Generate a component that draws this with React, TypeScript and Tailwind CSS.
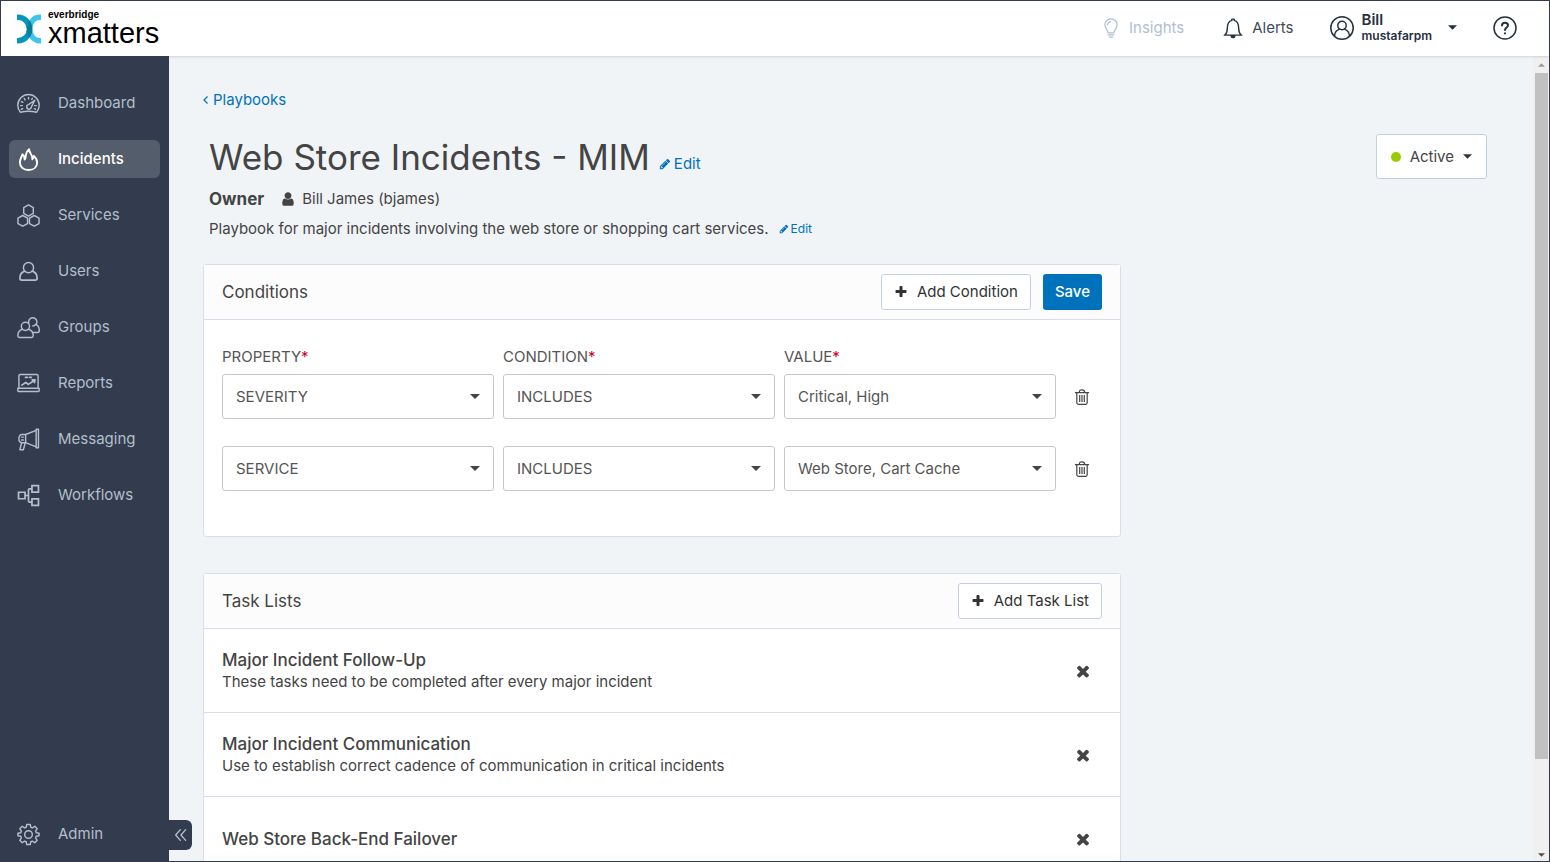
import { useState } from "react";
import type { ReactNode } from "react";

interface IconProps {
  className?: string;
}

interface Condition {
  id: number;
  property: string;
  condition: string;
  value: string;
}

const faPaths = {
  plus: "M1600 736v192q0 40-28 68t-68 28h-416v416q0 40-28 68t-68 28h-192q-40 0-68-28t-28-68v-416h-416q-40 0-68-28t-28-68v-192q0-40 28-68t68-28h416v-416q0-40 28-68t68-28h192q40 0 68 28t28 68v416h416q40 0 68 28t28 68z",
  times:
    "M1490 1322q0 40-28 68l-136 136q-28 28-68 28t-68-28l-294-294-294 294q-28 28-68 28t-68-28l-136-136q-28-28-28-68t28-68l294-294-294-294q-28-28-28-68t28-68l136-136q28-28 68-28t68 28l294 294 294-294q28-28 68-28t68 28l136 136q28 28 28 68t-28 68l-294 294 294 294q28 28 28 68z",
  pencil:
    "M491 1536l91-91-235-235-91 91v107h128v128h107zm523-928q0-22-22-22-10 0-17 7l-542 542q-7 7-7 17 0 22 22 22 10 0 17-7l542-542q7-7 7-17zm-54-192l416 416-832 832h-416v-416zm683 96q0 53-37 90l-166 166-416-416 166-165q36-38 90-38 53 0 91 38l235 234q37 39 37 91z",
  user: "M1536 1399q0 109-62.5 187t-150.5 78h-854q-88 0-150.5-78t-62.5-187q0-85 8.5-160.5t31.5-152 58.5-131 94-89 134.5-34.5q131 128 313 128t313-128q76 0 134.5 34.5t94 89 58.5 131 31.5 152 8.5 160.5zm-256-887q0 159-112.5 271.5t-271.5 112.5-271.5-112.5-112.5-271.5 112.5-271.5 271.5-112.5 271.5 112.5 112.5 271.5z",
};

function Fa({ name, className }: { name: keyof typeof faPaths; className?: string }) {
  return (
    <svg viewBox="0 0 1792 1792" fill="currentColor" className={className} aria-hidden="true">
      <path d={faPaths[name]} />
    </svg>
  );
}

function Caret({ className }: IconProps) {
  return (
    <svg viewBox="0 0 10 5" fill="currentColor" className={className} aria-hidden="true">
      <path d="M0 0h10L5 5z" />
    </svg>
  );
}

function Line({ children, className = "w-[23px] h-[23px]" }: { children: ReactNode; className?: string }) {
  return (
    <svg
      viewBox="0 0 24 24"
      fill="none"
      stroke="currentColor"
      strokeWidth="1.5"
      strokeLinecap="round"
      strokeLinejoin="round"
      className={className}
      aria-hidden="true"
    >
      {children}
    </svg>
  );
}

const navItems: { label: string; icon: ReactNode }[] = [
  {
    label: "Dashboard",
    icon: (
      <Line>
        <path d="M3.600 21.200C1.800 19 .8 16.500 .8 13.800a11.200 11.200 0 0 1 22.400 0c0 2.700-1 5.200-2.800 7.400-5.400-1.500-11.400-1.500-16.800 0z" />
        <path d="M12 5.600v1.800M7.600 6.800l.8 1.500M4.600 10l1.500.8M3.800 14.200h1.800M4.600 18l1.400-.6M19.400 18l-1.400-.6M20.200 14.200h-1.800M16 6.600l-.6 1.200" />
        <path d="M18.600 8.600l-6.600 4.600a2.400 2.400 0 1 0 2.900 2.500z" />
      </Line>
    ),
  },
  {
    label: "Incidents",
    icon: (
      <Line>
        <path
          strokeWidth="2"
          d="M12 23C6.500 23 3 19.600 3 14.900c0-3.500 2-5.300 2.600-8.300 1.700 1.200 2.400 3 2.400 5.400C9.300 10.400 9 8.600 9.500 6.400 10 4.200 11 2.600 12.600 1.200c.2 2.500.8 3.800 2 5.300 1.200 1.600 1.600 3 1.400 5.300 1-.8 1.600-2 1.600-3.600C19.600 10 21 12.300 21 15c0 4.700-3.500 8-9 8z"
        />
      </Line>
    ),
  },
  {
    label: "Services",
    icon: (
      <Line>
        <path d="M12 1l5 2.900v5.800l-5 2.900-5-2.900V3.900zM6 12l5 2.800v5.600l-5 2.800-5-2.800v-5.600zM18 12l5 2.800v5.600l-5 2.800-5-2.800v-5.600z" />
      </Line>
    ),
  },
  {
    label: "Users",
    icon: (
      <Line>
        <circle cx="12" cy="8" r="5.300" />
        <path strokeWidth="1.800" d="M8 11.600c-3.200 1-5 3.500-5 7.400 0 1.200.7 1.900 2 1.900h14c1.300 0 2-.7 2-1.900 0-3.900-1.800-6.400-5-7.400" />
      </Line>
    ),
  },
  {
    label: "Groups",
    icon: (
      <Line>
        <circle cx="8.800" cy="10.800" r="4.300" />
        <path d="M5.700 13.900C2.500 14.700.9 17 .9 20.600c0 1.200.5 1.800 1.700 1.800h12.600c1.200 0 1.700-.6 1.700-1.800 0-3.600-1.700-5.900-5-6.700" />
        <path d="M12.300 7.200a4.300 4.300 0 1 1 4.200 3.200M19.300 8.700c2.700.8 4 3 4 6.700 0 1.200-.5 1.800-1.700 1.800h-5.400" />
      </Line>
    ),
  },
  {
    label: "Reports",
    icon: (
      <Line>
        <path d="M2 17V3.800c0-.8.400-1.200 1.200-1.200h17.600c.8 0 1.200.4 1.200 1.200V17" />
        <path d="M.9 17h22.200v2.200c0 .8-.4 1.200-1.200 1.200H2.100c-.8 0-1.200-.4-1.200-1.200z" />
        <path strokeWidth="1.800" d="M5 13.700l4.200-2.800 2.600 2 6.600-4.200M15.800 8.300l3-.2-.6 2.900M8.800 5.500h2M13 5.500h2" />
      </Line>
    ),
  },
  {
    label: "Messaging",
    icon: (
      <Line>
        <path d="M9 6.800H5.200C3.200 6.800 2 8.400 2 11s1.200 4.300 3.200 4.300H9zM9 6.800l11-4.300v17.200L9 15.300M20 1.300h2.400v19.400H20z" />
        <path d="M4.800 15.400L3 22.700h3.600l2-7M4.700 9.500h2M4.700 12.600h2" />
      </Line>
    ),
  },
  {
    label: "Workflows",
    icon: (
      <Line>
        <path
          strokeWidth="1.800"
          strokeLinejoin="miter"
          d="M1.600 8.600h6.800v6.800H1.600zM15.600 1.600h6.800v6.800h-6.800zM15.600 15.600h6.800v6.800h-6.800zM8.400 12h3.600M15.600 5H13c-.7 0-1 .4-1 1v12c0 .6.3 1 1 1h2.600"
        />
      </Line>
    ),
  },
];

const taskLists = [
  {
    title: "Major Incident Follow-Up",
    description: "These tasks need to be completed after every major incident",
  },
  {
    title: "Major Incident Communication",
    description: "Use to establish correct cadence of communication in critical incidents",
  },
  { title: "Web Store Back-End Failover", description: "" },
];

const options = {
  property: ["SEVERITY", "SERVICE"],
  condition: ["INCLUDES", "EXCLUDES"],
  value: ["Critical, High", "Web Store, Cart Cache"],
};

const columns = ["property", "condition", "value"] as const;

function Logo() {
  return (
    <a href="#" className="flex items-center gap-[7px] text-black">
      <svg viewBox="0 0 24 30" className="w-6 h-[30px]" aria-hidden="true">
        <path d="M24 3.300h-1C17 3.300 12.800 8 12.800 15S17 26.700 23 26.700h1" fill="none" stroke="#3fc4ea" strokeWidth="5.500" />
        <path d="M0 3.300h1C7 3.300 12.400 8 12.400 15S7 26.700 1 26.700H0" fill="none" stroke="#0396bb" strokeWidth="5.500" />
        <path d="M12.600 6.500c3.400 5 3.400 12 0 17-3.400-5-3.400-12 0-17z" fill="#057a99" />
      </svg>
      <span className="flex flex-col font-['Liberation_Sans',sans-serif]">
        <span className="text-[10px] leading-[8px] font-bold">everbridge</span>
        <span className="text-[29px] leading-[28px]">xmatters</span>
      </span>
    </a>
  );
}

function Header() {
  return (
    <header className="relative z-10 flex justify-between items-center h-[55px] shrink-0 pl-4 pr-8 bg-white shadow-sm text-[15px] text-[#414b59]">
      <Logo />
      <div className="flex items-center pb-[2px]">
        <button type="button" className="flex items-center gap-2 mr-[38px] text-[#b1bfd0]" disabled>
          <Line className="w-5 h-6">
            <path d="M8.500 17.800c0-3.300-3.800-5-3.800-9.600a7.300 7.300 0 0 1 14.600 0c0 4.600-3.800 6.300-3.800 9.600zM8.700 20.300h6.600M10 22.800h4M8 8c.2-2 1.500-3.300 3.500-3.600" />
          </Line>
          Insights
        </button>
        <button type="button" className="flex items-center gap-2 mr-9">
          <Line className="w-[22px] h-[22px] text-[#26303f]">
            <path d="M3 19.800c2-1.800 2.800-4 2.800-7.600 0-4.500 1.700-7.600 4.900-8.500V2.300h2.600v1.400c3.200.9 4.900 4 4.900 8.500 0 3.600.8 5.800 2.800 7.600zM2.500 19.800h19" />
            <path d="M10 20.500h4c0 1.200-.8 2-2 2s-2-.8-2-2z" fill="currentColor" />
          </Line>
          Alerts
        </button>
        <button type="button" className="flex items-center gap-2 mr-9 text-left text-[#26303f]">
          <Line className="w-6 h-6">
            <circle cx="12" cy="12" r="11.200" />
            <circle cx="12" cy="9.500" r="4.200" />
            <path d="M4.500 20c.2-3.500 2-5.800 5-6.900M19.500 20c-.2-3.500-2-5.800-5-6.900" />
          </Line>
          <span className="flex flex-col font-semibold mr-2">
            <span className="text-[15px] leading-[16px]">Bill</span>
            <span className="text-[12px] leading-[16px]">mustafarpm</span>
          </span>
          <Caret className="w-[9px] h-[5px]" />
        </button>
        <button type="button" aria-label="Help" className="text-[#26303f]">
          <Line className="w-6 h-6">
            <circle cx="12" cy="12" r="11" />
            <path strokeWidth="2" d="M9 9.400C9 7.700 10.200 6.700 12 6.700s3 1 3 2.600c0 2.200-3 2.200-3 4.700M12 17.200v.2" />
          </Line>
        </button>
      </div>
    </header>
  );
}

function Sidebar() {
  const [active, setActive] = useState("Incidents");

  return (
    <aside className="relative z-10 flex flex-col justify-between w-[168px] shrink-0 pl-2 pr-[9px] pt-7 pb-2 bg-[#323c4e] text-[15px] text-[#b3bfcb]">
      <nav className="flex flex-col gap-[18px]">
        {navItems.map((item) => (
          <a
            key={item.label}
            href="#"
            onClick={() => setActive(item.label)}
            className={`flex items-center gap-[18px] h-[38px] pl-2 rounded-md ${
              active === item.label ? "bg-[#545d6b] text-white font-medium" : ""
            }`}
          >
            {item.icon}
            {item.label}
          </a>
        ))}
      </nav>
      <a href="#" className="flex items-center gap-[18px] h-[38px] pl-2">
        <Line>
          <circle cx="12" cy="12" r="4" />
          <path d="M10.200 1.500h3.600l.6 2.900 1.700.7 2.500-1.700 2.500 2.500-1.700 2.500.7 1.700 2.900.6v2.600l-2.900.6-.7 1.700 1.700 2.500-2.500 2.500-2.500-1.700-1.700.7-.6 2.900h-3.600l-.6-2.900-1.700-.7-2.500 1.700-2.500-2.500 1.700-2.500-.7-1.700-2.900-.6v-2.600l2.900-.6.7-1.700-1.700-2.500 2.500-2.500 2.500 1.700 1.700-.7z" />
        </Line>
        Admin
      </a>
      <button
        type="button"
        aria-label="Collapse menu"
        className="absolute left-full bottom-[11px] flex items-center justify-center w-[23px] h-[30px] rounded-r-md bg-[#323c4e]"
      >
        <Line className="w-4 h-4">
          <path strokeWidth="2" d="M11 4l-7 8 7 8M19 4l-7 8 7 8" />
        </Line>
      </button>
    </aside>
  );
}

function Scrollbar() {
  return (
    <div className="flex flex-col items-center justify-between w-4 shrink-0 pt-[7px] pb-1 bg-[#f0f0f0]" aria-hidden="true">
      <Caret className="w-[7px] h-1 rotate-180 text-[#9b9b9b]" />
      <div className="w-[13px] flex-1 mt-1.5">
        <div className="h-[88%] bg-[#c1c1c1]" />
      </div>
      <Caret className="w-[7px] h-1 text-[#505050]" />
    </div>
  );
}

function App() {
  const [conditions, setConditions] = useState<Condition[]>([
    { id: 1, property: "SEVERITY", condition: "INCLUDES", value: "Critical, High" },
    { id: 2, property: "SERVICE", condition: "INCLUDES", value: "Web Store, Cart Cache" },
  ]);
  const [lists, setLists] = useState(taskLists);

  const handleChange = (id: number, name: string, value: string) => {
    setConditions(conditions.map((c) => (c.id === id ? { ...c, [name]: value } : c)));
  };

  const addCondition = () => {
    setConditions([
      ...conditions,
      { id: Date.now(), property: "SEVERITY", condition: "INCLUDES", value: "Critical, High" },
    ]);
  };

  return (
    <div className="flex flex-col h-screen overflow-hidden border border-[#323c4e] bg-[#f0f4f7] font-['Inter',sans-serif] text-[15px] leading-[22px] text-[#444444]">
      <Header />
      <div className="flex flex-1 min-h-0">
        <Sidebar />
        <main className="flex-1 min-w-0 overflow-hidden pl-[34px] pr-[46px] pt-8">
          <a href="#" className="inline-flex items-center gap-1 text-[#0072bc]">
            <svg viewBox="0 0 6 8" fill="none" stroke="currentColor" strokeWidth="1.2" className="w-[6px] h-2" aria-hidden="true">
              <path d="M4.500.5L1 4l3.500 3.500" />
            </svg>
            Playbooks
          </a>
          <div className="flex items-start justify-between mt-[23px] pl-[6px]">
            <div>
              <div className="flex items-baseline gap-[9px]">
                <h1 className="text-[35px] leading-[46px]">Web Store Incidents - MIM</h1>
                <button type="button" className="flex items-center gap-[3px] text-[#0072bc]">
                  <Fa name="pencil" className="w-3 h-3" />
                  Edit
                </button>
              </div>
              <p className="flex items-center mt-2">
                <span className="text-[17px] font-bold">Owner</span>
                <Fa name="user" className="w-4 h-4 ml-4 mr-[6px]" />
                Bill James (bjames)
              </p>
              <p className="flex items-center gap-[10px] mt-2">
                Playbook for major incidents involving the web store or shopping cart services.
                <button type="button" className="flex items-center gap-[2px] text-[12px] text-[#0072bc]">
                  <Fa name="pencil" className="w-[10px] h-[10px]" />
                  Edit
                </button>
              </p>
            </div>
            <button
              type="button"
              className="flex items-center gap-[9px] h-[45px] px-[14px] rounded-[3px] border border-[#c3cfe0] bg-white"
            >
              <span className="w-[10px] h-[10px] rounded-full bg-[#99cc00]" />
              Active
              <Caret className="w-[9px] h-[5px] text-[#333333]" />
            </button>
          </div>

          <section className="max-w-[918px] mt-6 rounded-[3px] border border-[#d8dfea] bg-white">
            <div className="flex items-center justify-between h-[55px] px-[18px] border-b border-[#d8dfea] bg-[#fcfcfc]">
              <h2 className="text-[17px]">Conditions</h2>
              <div className="flex gap-3">
                <button
                  type="button"
                  onClick={addCondition}
                  className="flex items-center gap-[9px] h-9 px-3 rounded-[3px] border border-[#c3cfe0] bg-white text-[#333333]"
                >
                  <Fa name="plus" className="w-[14px] h-[14px]" />
                  Add Condition
                </button>
                <button type="button" className="h-9 px-3 rounded-[3px] bg-[#0072bc] text-white font-medium">
                  Save
                </button>
              </div>
            </div>
            <div className="px-[18px] pt-[26px] pb-[45px]">
              <div className="grid grid-cols-[1fr_1fr_1fr_37px] gap-x-[9px] mb-[6px] text-[#555555]">
                {columns.map((name) => (
                  <label key={name} htmlFor={`${name}-1`} className="uppercase">
                    {name}
                    <span className="text-[#cc0022]">*</span>
                  </label>
                ))}
              </div>
              <div className="flex flex-col gap-[27px]">
                {conditions.map((row) => (
                  <div key={row.id} className="grid grid-cols-[1fr_1fr_1fr_37px] gap-x-[9px]">
                    {columns.map((name) => (
                      <div key={name} className="relative">
                        <select
                          id={`${name}-${row.id}`}
                          aria-label={name}
                          value={row[name]}
                          onChange={(e) => handleChange(row.id, name, e.target.value)}
                          className="appearance-none w-full h-[45px] pl-[13px] pr-8 rounded-[3px] border border-[#c8c8c8] bg-white text-[#555555]"
                        >
                          {options[name].map((o) => (
                            <option key={o}>{o}</option>
                          ))}
                        </select>
                        <Caret className="absolute right-[14px] top-5 w-[10px] h-[5px] pointer-events-none" />
                      </div>
                    ))}
                    <button
                      type="button"
                      aria-label="Delete condition"
                      onClick={() => setConditions(conditions.filter((c) => c.id !== row.id))}
                      className="flex items-center justify-center w-[34px]"
                    >
                      <svg viewBox="0 0 14 16" fill="none" stroke="currentColor" strokeWidth="1.2" className="w-[14px] h-4" aria-hidden="true">
                        <path d="M0 3.600h14M4.300 3.400c0-1.800.8-2.600 2.700-2.600s2.700.8 2.700 2.600M1.800 3.600v10.200c0 1 .5 1.500 1.500 1.500h7.400c1 0 1.500-.5 1.500-1.500V3.600M4.700 6v7M7 6v7M9.300 6v7" />
                      </svg>
                    </button>
                  </div>
                ))}
              </div>
            </div>
          </section>

          <section className="max-w-[918px] mt-9 rounded-[3px] border border-[#d8dfea] bg-white">
            <div className="flex items-center justify-between h-[54px] px-[18px] bg-[#fcfcfc]">
              <h2 className="text-[17px]">Task Lists</h2>
              <button
                type="button"
                className="flex items-center gap-[9px] h-9 px-3 rounded-[3px] border border-[#c3cfe0] bg-white text-[#333333]"
              >
                <Fa name="plus" className="w-[14px] h-[14px]" />
                Add Task List
              </button>
            </div>
            <ul>
              {lists.map((list) => (
                <li
                  key={list.title}
                  className="flex items-center justify-between h-[84px] pl-[18px] pr-7 border-t border-[#d8dfea]"
                >
                  <div>
                    <h3 className="text-[17px] font-medium">{list.title}</h3>
                    {list.description && <p>{list.description}</p>}
                  </div>
                  <button
                    type="button"
                    aria-label="Remove task list"
                    onClick={() => setLists(lists.filter((l) => l.title !== list.title))}
                  >
                    <Fa name="times" className="w-[18px] h-[18px]" />
                  </button>
                </li>
              ))}
            </ul>
          </section>
        </main>
        <Scrollbar />
      </div>
    </div>
  );
}

export default App;
